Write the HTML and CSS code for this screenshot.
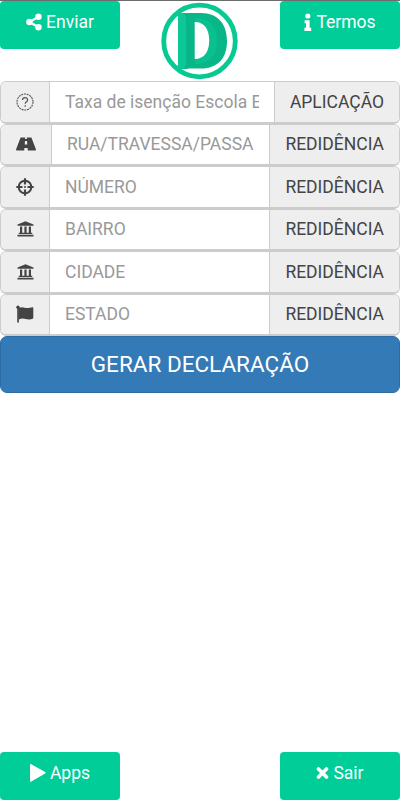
FILE: index.html
```html
<!DOCTYPE html>
<html lang="pt-br">
<head>
    <meta charset="UTF-8">
    <meta name="viewport" content="width=device-width, initial-scale=1">
    <title>Declaração de Residência</title>
    <link rel="stylesheet" href="styles.css">
</head>
<body>

<header class="topo">
    <button class="btn-menu">
        <svg class="icon" width="16" height="18" viewBox="0 0 16 18">
            <path d="M12.5 3.8L3.5 9l9 5.2" fill="none" stroke="#fff" stroke-width="2.2"/>
            <circle cx="12.5" cy="3.7" r="3.2"/><circle cx="3.4" cy="9" r="3.2"/><circle cx="12.5" cy="14.3" r="3.2"/>
        </svg>
        <span>Enviar</span>
    </button>
    <svg class="logo" width="78" height="78" viewBox="0 0 78 78">
        <circle cx="38.5" cy="39" r="35.8" fill="#fff" stroke="#09c993" stroke-width="4.8"/>
        <path d="M17 11h10v56H15q2-2 2-5z" fill="#0bc896"/>
        <path d="M22 11h18c17 0 26 11 26 28S57 66.5 40 66.5H22q3-2 3-6V17q0-4-3-6z" fill="#08b688"/>
        <path d="M34 16c15 0 22 9 22 23s-7 23-22 23z" fill="#0bc08f"/>
        <path d="M33.7 20c10 0 14.5 8 14.5 18.5S43.700 57 33.700 57z" fill="#fff"/>
    </svg>
    <button class="btn-menu">
        <svg class="icon" width="8" height="18" viewBox="0 0 8 18">
            <circle cx="3.8" cy="3" r="2.6"/>
            <path d="M.6 7.2h5v7.6h1.6V18H.4v-3.2H2v-4.6H.6z"/>
        </svg>
        <span>Termos</span>
    </button>
</header>

<form class="form">
    <div class="input-group">
        <span class="addon addon-icon">
            <svg width="18" height="18" viewBox="0 0 18 18">
                <circle cx="9" cy="9" r="8" fill="none" stroke="#555" stroke-width="1.1" stroke-dasharray="2 .8"/>
                <path d="M6.5 7.1c0-3.3 5.1-3.2 5.1-.2 0 1.8-2.4 1.8-2.4 3.9" fill="none" stroke="#555" stroke-width="1.2"/>
                <circle cx="9.2" cy="13" r=".8"/>
            </svg>
        </span>
        <input class="campo" type="text" placeholder="Taxa de isenção Escola Estadual">
        <span class="addon addon-texto">APLICAÇÃO</span>
    </div>
    <div class="input-group">
        <span class="addon addon-icon addon-rua">
            <svg width="20" height="14" viewBox="0 0 20 14">
                <path d="M4.6.5h4.6L9 2h2L10.8.5h4.6L20 12.5q.1 1-.8 1h-7.4l-.2-2.5H8.4l-.2 2.5H.8q-.9 0-.8-1zM9 4l-.3 3.4h2.6L11 4z" fill-rule="evenodd"/>
            </svg>
        </span>
        <input class="campo" type="text" placeholder="RUA/TRAVESSA/PASSA">
        <span class="addon addon-texto">REDIDÊNCIA</span>
    </div>
    <div class="input-group">
        <span class="addon addon-icon">
            <svg width="18" height="18" viewBox="0 0 18 18">
                <circle cx="9" cy="9" r="6.3" fill="none" stroke="#444" stroke-width="2"/>
                <path d="M9 .3v6.2M9 11.5v6.2M.3 9h6.2M11.5 9h6.2" stroke="#444" stroke-width="2.2"/>
                <circle cx="9" cy="9" r="1"/>
            </svg>
        </span>
        <input class="campo" type="text" placeholder="NÚMERO">
        <span class="addon addon-texto">REDIDÊNCIA</span>
    </div>
    <div class="input-group">
        <span class="addon addon-icon">
            <svg width="17" height="16" viewBox="0 0 17 16">
                <path d="M8.5.3l8 3.2v1.3H.5V3.5zM3 5.5h2.2V12H3zM7.4 5.5h2.2V12H7.4zM11.8 5.5H14V12h-2.2zM1.8 11.8h13.4V13H1.8zM.5 13.8h16v1.7H.5z"/>
            </svg>
        </span>
        <input class="campo" type="text" placeholder="BAIRRO">
        <span class="addon addon-texto">REDIDÊNCIA</span>
    </div>
    <div class="input-group">
        <span class="addon addon-icon">
            <svg width="17" height="16" viewBox="0 0 17 16">
                <path d="M8.5.3l8 3.2v1.3H.5V3.5zM3 5.5h2.2V12H3zM7.4 5.5h2.2V12H7.4zM11.8 5.5H14V12h-2.2zM1.8 11.8h13.4V13H1.8zM.5 13.8h16v1.7H.5z"/>
            </svg>
        </span>
        <input class="campo" type="text" placeholder="CIDADE">
        <span class="addon addon-texto">REDIDÊNCIA</span>
    </div>
    <div class="input-group">
        <span class="addon addon-icon">
            <svg width="18" height="18" viewBox="0 0 18 18">
                <circle cx="2" cy="2.3" r="1.7"/>
                <path d="M1.2 2h1.7v15.5H1.2z"/>
                <path d="M2.8 3c5-2.6 6.2 1.8 13.6-.7q.9-.3.9.5v10.4c-6.5 3.6-8.5-1.6-14.5 1.3z"/>
            </svg>
        </span>
        <input class="campo" type="text" placeholder="ESTADO">
        <span class="addon addon-texto">REDIDÊNCIA</span>
    </div>
    <button class="btn-gerar" type="button">GERAR DECLARAÇÃO</button>
</form>

<footer class="rodape">
    <button class="btn-menu">
        <svg class="icon" width="16" height="18" viewBox="0 0 16 18">
            <path d="M0 1q0-1.4 1.3-.7l13.8 7.8q1.1.7 0 1.4L1.3 17.6Q0 18.3 0 17z"/>
        </svg>
        <span>Apps</span>
    </button>
    <button class="btn-menu">
        <svg class="icon" width="13" height="18" viewBox="0 0 13 18">
            <path d="M2.5 5l8 8M10.5 5l-8 8" stroke="#fff" stroke-width="3.6" stroke-linecap="round"/>
        </svg>
        <span>Sair</span>
    </button>
</footer>

</body>
</html>
```
FILE: styles.css
```css
* {
    box-sizing: border-box;
}
body {
    font-family: Roboto, "Liberation Sans", sans-serif;
    font-size: 17.5px;
    background: #fff;
    margin: 0;
    height: 100vh;
    display: flex;
    flex-direction: column;
    overflow: hidden;
}
button, input {
    font-family: inherit;
}
svg {
    fill: #444;
    flex: none;
}
.topo {
    height: 81px;
    flex: none;
    display: flex;
    justify-content: space-between;
    align-items: flex-start;
    border-top: 1px solid #6c6c6c;
}
.btn-menu {
    width: 120px;
    height: 48px;
    display: flex;
    justify-content: center;
    align-items: flex-start;
    gap: 4px;
    padding: 11px 0 0;
    background: #00cd98;
    color: #fff;
    border: none;
    border-radius: 4px;
    font-size: 17.5px;
    line-height: 20px;
}
.icon {
    fill: #fff;
    margin-top: 1px;
}
.logo {
    margin-top: 1px;
}
.input-group {
    height: 42.5px;
    display: flex;
    border: 1px solid #ccc;
    border-bottom-width: 2px;
    border-radius: 6px;
    overflow: hidden;
}
.addon {
    flex: none;
    display: flex;
    align-items: center;
    justify-content: center;
    background: #eee;
    color: #444;
}
.addon-icon {
    width: 49px;
    border-right: 1px solid #ccc;
}
.addon-rua {
    width: 51px;
}
.addon-texto {
    padding: 0 15px;
    border-left: 1px solid #ccc;
}
.campo {
    flex: 1;
    min-width: 0;
    padding: 0 15px;
    border: none;
    outline: none;
    font-size: 17.5px;
    background: #fff;
}
.campo::placeholder {
    color: #999;
}
.btn-gerar {
    display: block;
    width: 100%;
    height: 57px;
    padding: 0 0 2px;
    background: #337ab7;
    color: #fff;
    border: 1px solid #2e6da4;
    border-radius: 7px;
    font-size: 22.5px;
}
.rodape {
    margin-top: auto;
    display: flex;
    justify-content: space-between;
}
```
